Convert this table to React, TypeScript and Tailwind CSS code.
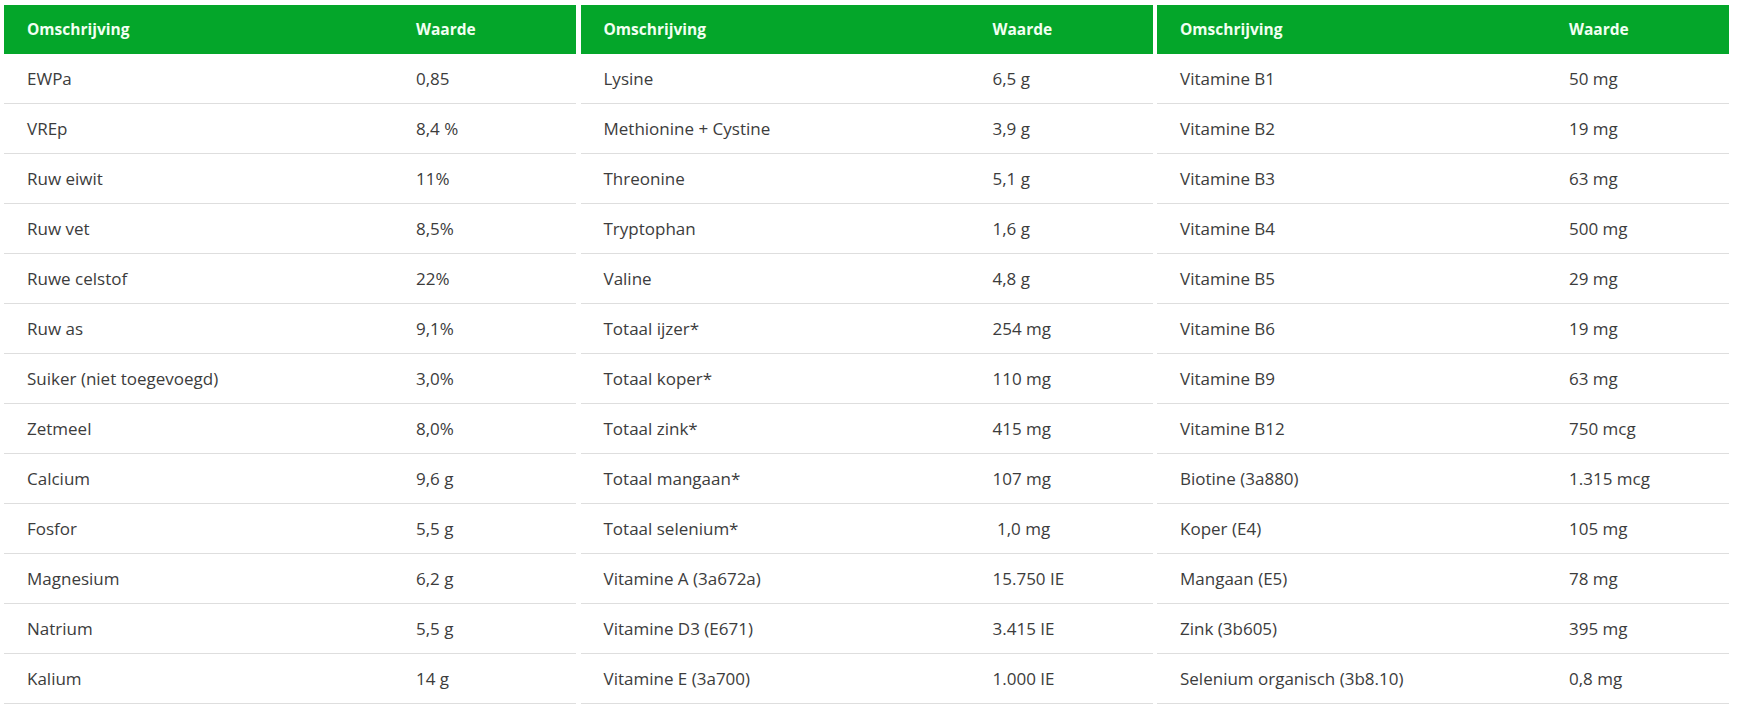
const tables: [string, string][][] = [
  [
    ["EWPa", "0,85"],
    ["VREp", "8,4 %"],
    ["Ruw eiwit", "11%"],
    ["Ruw vet", "8,5%"],
    ["Ruwe celstof", "22%"],
    ["Ruw as", "9,1%"],
    ["Suiker (niet toegevoegd)", "3,0%"],
    ["Zetmeel", "8,0%"],
    ["Calcium", "9,6 g"],
    ["Fosfor", "5,5 g"],
    ["Magnesium", "6,2 g"],
    ["Natrium", "5,5 g"],
    ["Kalium", "14 g"],
  ],
  [
    ["Lysine", "6,5 g"],
    ["Methionine + Cystine", "3,9 g"],
    ["Threonine", "5,1 g"],
    ["Tryptophan", "1,6 g"],
    ["Valine", "4,8 g"],
    ["Totaal ijzer*", "254 mg"],
    ["Totaal koper*", "110 mg"],
    ["Totaal zink*", "415 mg"],
    ["Totaal mangaan*", "107 mg"],
    ["Totaal selenium*", "\u00a01,0 mg"],
    ["Vitamine A (3a672a)", "15.750 IE"],
    ["Vitamine D3 (E671)", "3.415 IE"],
    ["Vitamine E (3a700)", "1.000 IE"],
  ],
  [
    ["Vitamine B1", "50 mg"],
    ["Vitamine B2", "19 mg"],
    ["Vitamine B3", "63 mg"],
    ["Vitamine B4", "500 mg"],
    ["Vitamine B5", "29 mg"],
    ["Vitamine B6", "19 mg"],
    ["Vitamine B9", "63 mg"],
    ["Vitamine B12", "750 mcg"],
    ["Biotine (3a880)", "1.315 mcg"],
    ["Koper (E4)", "105 mg"],
    ["Mangaan (E5)", "78 mg"],
    ["Zink (3b605)", "395 mg"],
    ["Selenium organisch (3b8.10)", "0,8 mg"],
  ],
];

const NutritionTable = ({ rows }: { rows: [string, string][] }) => (
  <div className="w-[572px]">
    <div className="grid grid-cols-[389px_1fr] h-[49px] items-center bg-[#04a62a] px-[23px] text-[15.5px] font-bold text-[#f2fff2]">
      <div>Omschrijving</div>
      <div>Waarde</div>
    </div>
    {rows.map(([label, value]) => (
      <div
        key={label}
        className="grid grid-cols-[389px_1fr] h-[50px] items-center border-b border-[#dedede] px-[23px] text-[17px] text-[#3c3c3c]"
      >
        <div>{label}</div>
        <div>{value}</div>
      </div>
    ))}
  </div>
);

export default function App() {
  return (
    <div
      className="min-h-screen bg-white pt-[5px] pl-[4px]"
      style={{ fontFamily: '"Open Sans", "Noto Sans", sans-serif' }}
    >
      <div className="flex gap-[4.5px]">
        {tables.map((rows, i) => (
          <NutritionTable key={i} rows={rows} />
        ))}
      </div>
    </div>
  );
}
